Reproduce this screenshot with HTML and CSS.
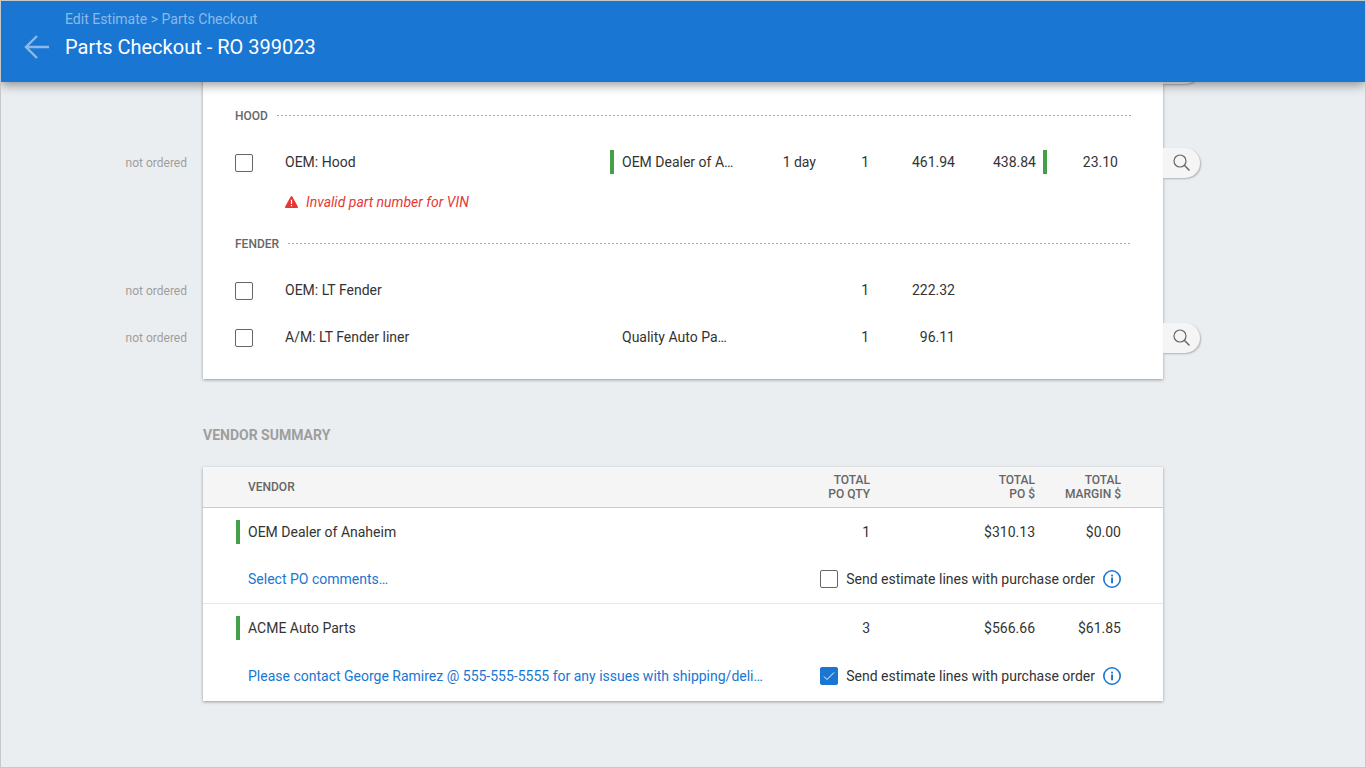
FILE: index.html
```html
<!doctype html>
<html lang="en">
<head>
    <meta charset="utf-8">
    <title>Parts Checkout - RO 399023</title>
    <link rel="stylesheet" href="styles.css">
</head>
<body>

<svg class="sprite" aria-hidden="true">
    <symbol id="icon-search" viewBox="0 0 18 18">
        <circle cx="7" cy="7" r="6" fill="none" stroke="currentColor" stroke-width="1.2"/>
        <path d="M11.3 11.3L16.5 16.5" fill="none" stroke="currentColor" stroke-width="1.5"/>
    </symbol>
    <symbol id="icon-info" viewBox="0 0 18 18">
        <circle cx="9" cy="9" r="8.2" fill="none" stroke="currentColor" stroke-width="1.6"/>
        <rect x="8.1" y="4.7" width="1.9" height="1.7" fill="currentColor"/>
        <rect x="8.1" y="7.5" width="1.9" height="5.8" fill="currentColor"/>
    </symbol>
</svg>

<header class="header">
    <a class="back" href="#" aria-label="Back">
        <svg width="26" height="24" viewBox="0 0 26 24" fill="none" stroke="currentColor" stroke-width="2.4">
            <path d="M26 12H3M14 1L3 12l11 11"/>
        </svg>
    </a>
    <div>
        <nav class="breadcrumb"><a href="#">Edit Estimate</a> &gt; <a href="#">Parts Checkout</a></nav>
        <h1 class="title">Parts Checkout - RO 399023</h1>
    </div>
</header>

<main class="content">
    <section class="card parts-card">
        <table class="parts">
            <colgroup>
                <col class="col-status">
                <col class="col-check">
                <col>
                <col class="col-vendor">
                <col class="col-days">
                <col class="col-qty">
                <col class="col-list">
                <col class="col-cost">
                <col class="col-margin">
                <col class="col-edge">
                <col class="col-search">
            </colgroup>
            <tbody>
                <tr>
                    <td colspan="10"></td>
                    <td class="tab-cell"><button class="search-tab" aria-label="Search part"><svg width="18" height="18"><use href="#icon-search"/></svg></button></td>
                </tr>
            </tbody>
            <tbody>
                <tr>
                    <td></td>
                    <th class="group" colspan="9" scope="rowgroup"><div class="group-title">HOOD</div></th>
                    <td></td>
                </tr>
                <tr>
                    <td class="status">not ordered</td>
                    <td class="check-cell"><input class="checkbox" type="checkbox" aria-label="OEM: Hood"></td>
                    <td>OEM: Hood</td>
                    <td><span class="vendor marked">OEM Dealer of A…</span></td>
                    <td class="num">1 day</td>
                    <td class="num">1</td>
                    <td class="num">461.94</td>
                    <td class="num">438.84</td>
                    <td><span class="margin marked">23.10</span></td>
                    <td></td>
                    <td class="tab-cell"><button class="search-tab" aria-label="Search part"><svg width="18" height="18"><use href="#icon-search"/></svg></button></td>
                </tr>
                <tr class="warning-row">
                    <td colspan="2"></td>
                    <td colspan="9">
                        <div class="warning">
                            <svg width="13" height="12" viewBox="0 0 13 12">
                                <path d="M5.6.8Q6.5-.6 7.4.8L12.8 10.5Q13.2 12 12 12H1Q-.2 12 .2 10.5z" fill="#e53935"/>
                                <path d="M6.5 3.8V8M6.5 9V10.3" stroke="#fff" stroke-width="1.2"/>
                            </svg>
                            Invalid part number for VIN
                        </div>
                    </td>
                </tr>
            </tbody>
            <tbody>
                <tr>
                    <td></td>
                    <th class="group" colspan="9" scope="rowgroup"><div class="group-title">FENDER</div></th>
                    <td></td>
                </tr>
                <tr>
                    <td class="status">not ordered</td>
                    <td class="check-cell"><input class="checkbox" type="checkbox" aria-label="OEM: LT Fender"></td>
                    <td>OEM: LT Fender</td>
                    <td></td>
                    <td></td>
                    <td class="num">1</td>
                    <td class="num">222.32</td>
                    <td></td>
                    <td></td>
                    <td></td>
                    <td></td>
                </tr>
                <tr>
                    <td class="status">not ordered</td>
                    <td class="check-cell"><input class="checkbox" type="checkbox" aria-label="A/M: LT Fender liner"></td>
                    <td>A/M: LT Fender liner</td>
                    <td><span class="vendor">Quality Auto Pa…</span></td>
                    <td></td>
                    <td class="num">1</td>
                    <td class="num">96.11</td>
                    <td></td>
                    <td></td>
                    <td></td>
                    <td class="tab-cell"><button class="search-tab" aria-label="Search part"><svg width="18" height="18"><use href="#icon-search"/></svg></button></td>
                </tr>
            </tbody>
        </table>
    </section>

    <h2 class="section-title">VENDOR SUMMARY</h2>

    <section class="card summary-card">
        <table class="summary">
            <colgroup>
                <col>
                <col class="col-po-qty">
                <col class="col-po">
                <col class="col-po-margin">
            </colgroup>
            <thead>
                <tr>
                    <th class="first" scope="col">VENDOR</th>
                    <th class="num" scope="col">TOTAL<br>PO QTY</th>
                    <th class="num" scope="col">TOTAL<br>PO $</th>
                    <th class="num last" scope="col">TOTAL<br>MARGIN $</th>
                </tr>
            </thead>
            <tbody>
                <tr>
                    <td class="first"><span class="vendor marked">OEM Dealer of Anaheim</span></td>
                    <td class="num">1</td>
                    <td class="num">$310.13</td>
                    <td class="num last">$0.00</td>
                </tr>
                <tr class="options-row">
                    <td class="last" colspan="4">
                        <div class="po-options">
                            <a class="comments" href="#">Select PO comments…</a>
                            <input class="checkbox" type="checkbox" id="send-1">
                            <label for="send-1">Send estimate lines with purchase order</label>
                            <button class="info" aria-label="More info"><svg width="18" height="18"><use href="#icon-info"/></svg></button>
                        </div>
                    </td>
                </tr>
            </tbody>
            <tbody>
                <tr>
                    <td class="first"><span class="vendor marked">ACME Auto Parts</span></td>
                    <td class="num">3</td>
                    <td class="num">$566.66</td>
                    <td class="num last">$61.85</td>
                </tr>
                <tr class="options-row">
                    <td class="last" colspan="4">
                        <div class="po-options">
                            <a class="comments" href="#">Please contact George Ramirez @ 555-555-5555 for any issues with shipping/deli…</a>
                            <input class="checkbox" type="checkbox" id="send-2" checked>
                            <label for="send-2">Send estimate lines with purchase order</label>
                            <button class="info" aria-label="More info"><svg width="18" height="18"><use href="#icon-info"/></svg></button>
                        </div>
                    </td>
                </tr>
            </tbody>
        </table>
    </section>
</main>

</body>
</html>
```
FILE: styles.css
```css
* {
    box-sizing: border-box;
}
body {
    margin: 0;
    min-height: 100vh;
    border: 1px solid #c8c8c8;
    background: #eaeef1;
    color: #333;
    font-family: Roboto, "Liberation Sans", sans-serif;
    font-size: 14px;
    line-height: 20px;
}
a {
    color: inherit;
    text-decoration: none;
}
button {
    padding: 0;
    border: 0;
    background: none;
    cursor: pointer;
}
svg {
    display: block;
    flex: none;
}
.sprite {
    display: none;
}

/* header */
.header {
    position: sticky;
    top: 0;
    z-index: 2;
    display: flex;
    gap: 16px;
    height: 81px;
    padding: 8px 22px;
    background: #1976d2;
    box-shadow: 0 3px 10px rgba(0, 0, 0, .4);
    color: #fff;
}
.back {
    align-self: flex-start;
    padding-top: 26px;
    color: #8cbae8;
}
.breadcrumb {
    color: #8cbae8;
}
.title {
    margin: 4px 0 0;
    font-size: 20px;
    font-weight: 400;
    line-height: 28px;
}

.content {
    max-width: 960px;
    margin: 0 auto;
    padding-bottom: 32px;
}
.card {
    background: #fff;
    box-shadow: 0 1px 3px rgba(0, 0, 0, .35);
}
.parts-card {
    margin-top: -37px;
    padding-bottom: 18px;
}
.summary-card {
    padding-bottom: 2px;
}
table {
    border-collapse: collapse;
    table-layout: fixed;
}
td, th {
    padding: 0;
    text-align: left;
}
.num {
    text-align: right;
}

/* the status and search columns hang outside the card */
.parts {
    width: calc(100% + 140px);
    margin: 0 -40px 0 -100px;
}
.parts tr {
    height: 47px;
}
.parts .warning-row {
    height: 34px;
}
.parts td {
    padding-bottom: 2px;
}
.parts .status,
.parts .check-cell,
.parts .tab-cell {
    padding-bottom: 0;
}
.col-status { width: 100px; }
.col-check { width: 82px; }
.col-vendor { width: 132px; }
.col-days { width: 74px; }
.col-qty { width: 53px; }
.col-list { width: 86px; }
.col-cost { width: 81px; }
.col-margin { width: 82px; }
.col-edge { width: 45px; }
.col-search { width: 40px; }

.status {
    padding-right: 16px;
    color: #9e9e9e;
    font-size: 12px;
    text-align: right;
}
.check-cell {
    padding-left: 32px;
}
.group {
    padding: 0 31px 0 32px;
}
.group-title {
    display: flex;
    align-items: center;
    gap: 9px;
    color: #666;
    font-size: 12px;
    font-weight: 500;
}
.group-title::after {
    content: "";
    flex: 1;
    height: 1px;
    background: repeating-linear-gradient(90deg, #aaa 0 2px, transparent 2px 4px);
}
.vendor,
.margin {
    display: flex;
    align-items: center;
    height: 24px;
    padding-left: 8px;
    border-left: 4px solid transparent;
}
.margin {
    justify-content: flex-end;
    margin-left: 7px;
}
.marked {
    border-color: #43a047;
}
.warning {
    display: flex;
    align-items: center;
    gap: 8px;
    color: #e53935;
    font-style: italic;
}
.search-tab {
    display: flex;
    align-items: center;
    justify-content: center;
    width: 37px;
    height: 30px;
    border-radius: 0 15px 15px 0;
    background: #f5f5f5;
    box-shadow: 1px 1px 2px rgba(0, 0, 0, .25);
    color: #666;
}

.checkbox {
    appearance: none;
    display: block;
    flex: none;
    width: 18px;
    height: 18px;
    margin: 0;
    border: 1px solid #666;
    border-radius: 2px;
    background: #fff;
}
.checkbox:checked {
    border-color: #1976d2;
    background: #1976d2 url("data:image/svg+xml,%3Csvg xmlns='http://www.w3.org/2000/svg' viewBox='0 0 16 16'%3E%3Cpath d='M3 8.5l3 3 7-7' fill='none' stroke='%23fff'/%3E%3C/svg%3E");
}

/* vendor summary */
.section-title {
    margin: 46px 0 22px;
    color: #9e9e9e;
    font-size: 14px;
    font-weight: 700;
    line-height: 20px;
}
.summary {
    width: 100%;
}
.summary thead tr {
    height: 40px;
    border-bottom: 1px solid #ccc;
    background: #f5f5f5;
}
.summary th {
    color: #666;
    font-size: 12px;
    font-weight: 500;
    line-height: 14px;
}
.summary tbody tr {
    height: 49px;
}
.summary .options-row {
    height: 47px;
}
.summary tbody + tbody {
    border-top: 1px solid #e8e8e8;
}
.col-po-qty { width: 120px; }
.col-po { width: 165px; }
.col-po-margin { width: 128px; }
.summary th.first {
    padding-left: 45px;
}
.summary td.first {
    padding-left: 33px;
}
.summary .last {
    padding-right: 42px;
}
.po-options {
    display: flex;
    align-items: center;
    gap: 8px;
    padding-left: 45px;
}
.comments {
    flex: 1;
    color: #1976d2;
}
.info {
    color: #1976d2;
}
```
